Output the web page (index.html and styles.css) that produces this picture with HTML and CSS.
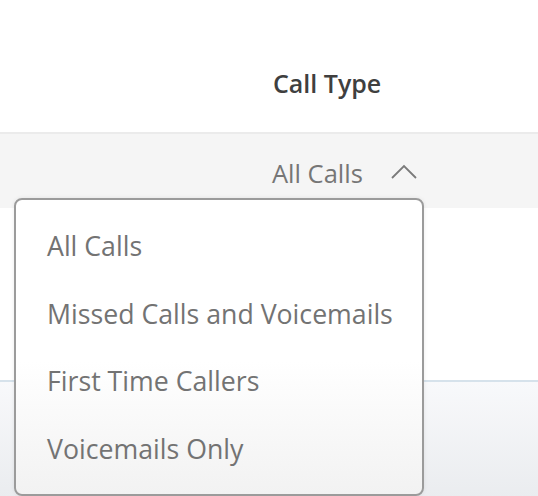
FILE: index.html
```html
<!DOCTYPE html>
<html>
<head>
<meta charset="utf-8">
<link rel="stylesheet" href="styles.css">
</head>
<body>
<div class="page">
  <div class="header"><span class="col-title">Call Type</span></div>
  <div class="filter-row">
    <span class="filter-value">All Calls</span>
    <svg class="chevron" width="28" height="16" viewBox="0 0 28 16"><polyline points="2,14 14,2 26,14" fill="none" stroke="#7a7a7a" stroke-width="1.8"/></svg>
  </div>
  <div class="content"></div>
  <div class="footer"></div>
  <ul class="dropdown">
    <li>All Calls</li>
    <li>Missed Calls and Voicemails</li>
    <li>First Time Callers</li>
    <li>Voicemails Only</li>
  </ul>
</div>
</body>
</html>
```
FILE: styles.css
```css
html, body { margin: 0; padding: 0; }
body { background: #fff; font-family: "Open Sans", "Liberation Sans", sans-serif; overflow: hidden; }
.page { position: relative; width: 538px; height: 496px; overflow: hidden; }
.header {
  height: 134px; box-sizing: border-box; padding: 66px 0 0 273px;
  border-bottom: 2px solid #ebebeb;
}
.col-title { font-size: 25px; font-weight: 600; color: #3f3f3f; line-height: 34px; display: block; }
.filter-row {
  height: 74px; box-sizing: border-box; background: #f5f5f5;
  display: flex; align-items: center; padding: 4px 0 0 272px;
}
.filter-value { font-size: 25.5px; color: #767676; line-height: 34px; }
.chevron { margin-left: 27px; margin-top: -3px; }
.content { height: 172px; background: #fff; }
.footer {
  height: 116px; border-top: 2px solid #d6e2eb;
  background: linear-gradient(#f8f9fb, #eaecef);
}
.dropdown {
  position: absolute; left: 14px; top: 198px; width: 410px; height: 298px;
  box-sizing: border-box; margin: 0; padding: 12px 0 0 31px; list-style: none;
  border: 2px solid #9b9b9b; border-radius: 8px;
  background: linear-gradient(#fff 55%, #f2f2f2);
  box-shadow: 0 0 4px rgba(0,0,0,0.08);
}
.dropdown li { font-size: 26.7px; line-height: 67.5px; color: #737373; white-space: nowrap; }
```
